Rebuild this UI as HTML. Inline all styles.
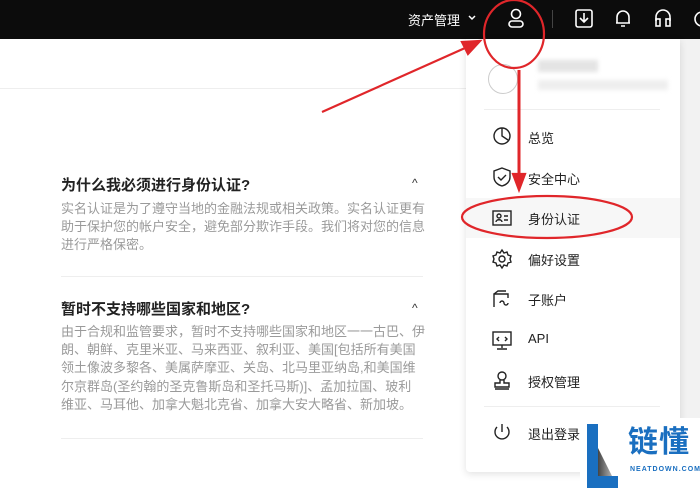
<!DOCTYPE html><html><head><meta charset="utf-8"><style>
*{margin:0;padding:0;box-sizing:border-box}
body{width:700px;height:488px;overflow:hidden;background:#fff;font-family:"Liberation Sans","Noto Sans CJK SC",sans-serif;position:relative}
.top{position:absolute;left:0;top:0;width:700px;height:39px;background:#0c0c0c;color:#fff}
.abs{position:absolute}
.t{font-size:15px;font-weight:bold;color:#222;position:absolute;left:61px}
.b{font-size:13px;color:#9a9a9a;position:absolute;left:61px;white-space:nowrap;line-height:18.2px}
.car{position:absolute;left:412px;font-size:12px;color:#333}
.hr{position:absolute;left:61px;width:362px;height:1px;background:#eee}
.panel{position:absolute;left:466px;top:39px;width:214px;height:433px;background:#fff;box-shadow:0 2px 8px rgba(0,0,0,.12);border-radius:0 0 4px 4px}
.mi{position:absolute;left:528px;font-size:13px;color:#222}
.ic{position:absolute;left:491px}
</style></head><body>
<div class="abs" style="left:680px;top:39px;width:20px;height:449px;background:#f2f2f2"></div>
<div class="abs" style="left:0;top:88px;width:466px;height:1px;background:#eee"></div>
<div class="top">
<div class="abs" style="left:408px;top:10px;font-size:13px">资产管理</div>
<svg class="abs" style="left:467px;top:13px" width="10" height="10"><path d="M2 3l3 3 3-3" stroke="#fff" stroke-width="1.5" fill="none"/></svg>
<svg class="abs" style="left:506px;top:7px" width="20" height="22" fill="none" stroke="#fff" stroke-width="1.6"><circle cx="10" cy="7" r="4.5"/><rect x="3" y="14" width="14" height="6" rx="3"/></svg>
<div class="abs" style="left:552px;top:10px;width:1px;height:18px;background:#444"></div>
<svg class="abs" style="left:574px;top:8px" width="20" height="22" fill="none" stroke="#fff" stroke-width="1.6"><rect x="2" y="2" width="16" height="17" rx="2"/><path d="M10 5v9M6 10l4 4 4-4"/></svg>
<svg class="abs" style="left:613px;top:7px" width="20" height="22" fill="none" stroke="#fff" stroke-width="1.6"><path d="M4 16V10a6 6 0 0112 0v6zM3 16h14M8 19h4"/></svg>
<svg class="abs" style="left:653px;top:7px" width="20" height="22" fill="none" stroke="#fff" stroke-width="1.6"><path d="M3 14v-4a7 7 0 0114 0v4"/><rect x="3" y="12" width="4" height="7"/><rect x="13" y="12" width="4" height="7"/></svg>
<svg class="abs" style="left:693px;top:9px" width="10" height="20" fill="none" stroke="#fff" stroke-width="1.6"><circle cx="9" cy="10" r="7"/></svg>
</div>
<div class="t" style="top:174px">为什么我必须进行身份认证?</div><div class="car" style="top:176px">^</div>
<div class="b" style="top:200px">实名认证是为了遵守当地的金融法规或相关政策。实名认证更有<br>助于保护您的帐户安全，避免部分欺诈手段。我们将对您的信息<br>进行严格保密。</div>
<div class="hr" style="top:276px"></div>
<div class="t" style="top:298px">暂时不支持哪些国家和地区?</div><div class="car" style="top:301px">^</div>
<div class="b" style="top:323px">由于合规和监管要求，暂时不支持哪些国家和地区一一古巴、伊<br>朗、朝鲜、克里米亚、马来西亚、叙利亚、美国[包括所有美国<br>领土像波多黎各、美属萨摩亚、关岛、北马里亚纳岛,和美国维<br>尔京群岛(圣约翰的圣克鲁斯岛和圣托马斯)]、孟加拉国、玻利<br>维亚、马耳他、加拿大魁北克省、加拿大安大略省、新加坡。</div>
<div class="hr" style="top:438px"></div>
<div class="panel"></div>
<div class="abs" style="left:488px;top:64px;width:30px;height:30px;border-radius:50%;border:1.5px solid #ccc"></div>
<div class="abs" style="left:538px;top:60px;width:60px;height:12px;background:#e4e4e4;filter:blur(2px)"></div>
<div class="abs" style="left:538px;top:80px;width:130px;height:10px;background:#eee;filter:blur(2px)"></div>
<div class="abs" style="left:484px;top:109px;width:176px;height:1px;background:#eee"></div>
<div class="abs" style="left:466px;top:198px;width:214px;height:40px;background:#f7f7f7"></div>
<svg class="ic" style="top:126px" width="22" height="20" fill="none" stroke="#222" stroke-width="1.4"><circle cx="11" cy="10" r="8"/><path d="M11 2v8l6 4"/></svg>
<div class="mi" style="top:128px">总览</div>
<svg class="ic" style="top:166px" width="22" height="22" fill="none" stroke="#222" stroke-width="1.4"><path d="M11 2l8 3v6c0 5-4 8-8 9-4-1-8-4-8-9V5z"/><path d="M7 11l3 3 5-5"/></svg>
<div class="mi" style="top:169px">安全中心</div>
<svg class="ic" style="top:208px" width="22" height="20" fill="none" stroke="#222" stroke-width="1.4"><rect x="2" y="3" width="18" height="14"/><circle cx="8" cy="8" r="2"/><path d="M5 14c0-3 6-3 6 0M13 8h4M13 12h4"/></svg>
<div class="mi" style="top:209px">身份认证</div>
<svg class="ic" style="top:248px" width="22" height="22" fill="none" stroke="#222" stroke-width="1.4"><circle cx="11" cy="11" r="3"/><path d="M11 2l2 3 3-1 1 3 3 1-1 3 1 3-3 1-1 3-3-1-2 3-2-3-3 1-1-3-3-1 1-3-1-3 3-1 1-3 3 1z"/></svg>
<div class="mi" style="top:250px">偏好设置</div>
<svg class="ic" style="top:289px" width="22" height="20" fill="none" stroke="#222" stroke-width="1.4"><path d="M3 18V5h14v4M3 5l4-3h8"/><path d="M9 14a2 2 0 014 0 2 2 0 004 0"/></svg>
<div class="mi" style="top:290px">子账户</div>
<svg class="ic" style="top:329px" width="22" height="22" fill="none" stroke="#222" stroke-width="1.4"><rect x="2" y="3" width="18" height="13"/><path d="M11 16v3M6 20h10M8 8l-2 2 2 2M14 8l2 2-2 2"/></svg>
<div class="mi" style="top:331px">API</div>
<svg class="ic" style="top:369px" width="22" height="22" fill="none" stroke="#222" stroke-width="1.4"><circle cx="11" cy="7" r="4"/><path d="M9 11v3H4v4h14v-4h-5v-3M4 20h14"/></svg>
<div class="mi" style="top:372px">授权管理</div>
<div class="abs" style="left:484px;top:406px;width:176px;height:1px;background:#eee"></div>
<svg class="ic" style="top:421px" width="22" height="22" fill="none" stroke="#222" stroke-width="1.4"><path d="M11 3v8M6 6a7 7 0 1010 0"/></svg>
<div class="mi" style="top:424px">退出登录</div>
<div class="abs" style="left:580px;top:418px;width:120px;height:70px;background:#fff"></div>
<svg class="abs" style="left:580px;top:418px" width="40" height="70"><defs><linearGradient id="g" x1="0" x2="1"><stop offset="0" stop-color="#444"/><stop offset="1" stop-color="#ddd"/></linearGradient></defs><polygon points="7,6 18,6 18,70 7,70" fill="#1a6fc0"/><polygon points="18,30 38,70 18,70" fill="url(#g)"/><rect x="18" y="58" width="20" height="12" fill="#1a6fc0"/></svg>
<div class="abs" style="left:628px;top:426px;font-size:30px;font-weight:bold;color:#1a6fc0;letter-spacing:1px;line-height:34px">链懂</div>
<div class="abs" style="left:630px;top:466px;font-size:7px;color:#1a6fc0;letter-spacing:1px;font-weight:bold">NEATDOWN.COM</div>
<svg class="abs" style="left:0;top:0" width="700" height="488" fill="none" stroke="#e0262a" stroke-width="2.2">
<ellipse cx="514" cy="34" rx="30" ry="34"/>
<ellipse cx="547" cy="217" rx="85" ry="21"/>
<path d="M322 112L474 44"/><path d="M480 41l-18 1 6 12z" fill="#e0262a"/>
<path d="M519 70V178" stroke-width="3"/><path d="M513 174l6 16 6-16z" fill="#e0262a"/>
</svg>
</body></html>
